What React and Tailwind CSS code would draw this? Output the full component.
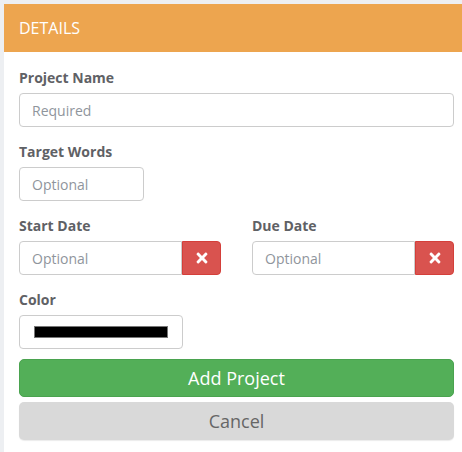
import React from "react";
import { FaTimes } from "react-icons/fa";

function Label({ children }) {
  return (
    <div className="h-5 leading-5 mb-[5px] text-[14px] font-bold text-[#5f6165]">
      {children}
    </div>
  );
}

function DateField({ label }) {
  return (
    <div className="flex-1">
      <Label>{label}</Label>
      <div className="flex h-[34px]">
        <div className="flex-1 flex items-center border border-[#cccccc] rounded-l-[4px] pl-3 text-[14px] text-[#8f959c]">
          Optional
        </div>
        <div className="w-[39px] flex items-center justify-center bg-[#d9534f] border border-[#d43f3a] rounded-r-[4px] text-white">
          <FaTimes className="w-[16px] h-[16px]" />
        </div>
      </div>
    </div>
  );
}

export default function App() {
  return (
    <div
      className="min-h-[452px] bg-[#edeff2] pt-1 pl-1"
      style={{ fontFamily: '"Open Sans", "Liberation Sans", sans-serif' }}
    >
      <div className="bg-white min-h-[448px]">
        <div className="h-12 bg-[#eda54f] flex items-center pl-[15px] text-white text-[16px]">
          DETAILS
        </div>
        <div className="pl-[15px] pr-[8px] pt-4">
          <div className="mb-[15px]">
            <Label>Project Name</Label>
            <div className="h-[34px] flex items-center border border-[#cccccc] rounded-[4px] pl-3 text-[14px] text-[#8f959c]">
              Required
            </div>
          </div>
          <div className="mb-[15px]">
            <Label>Target Words</Label>
            <div className="w-[125px] h-[34px] flex items-center border border-[#cccccc] rounded-[4px] pl-3 text-[14px] text-[#8f959c]">
              Optional
            </div>
          </div>
          <div className="mb-[15px] flex gap-[31px]">
            <DateField label="Start Date" />
            <DateField label="Due Date" />
          </div>
          <div className="mb-[10px]">
            <Label>Color</Label>
            <div className="w-[164px] h-[34px] flex items-center border border-[#cccccc] rounded-[4px] px-[14px]">
              <div className="flex-1 h-[12px] bg-black border border-[#777777]" />
            </div>
          </div>
          <div className="h-[38px] flex items-center justify-center bg-[#53af58] border border-[#4aa34f] rounded-[5px] text-white text-[18px]">
            Add Project
          </div>
          <div className="mt-[5px] h-[38px] flex items-center justify-center bg-[#d9d9d9] rounded-[5px] text-[#666666] text-[18px] shadow-[0_1px_1px_rgba(0,0,0,0.08)]">
            Cancel
          </div>
        </div>
      </div>
    </div>
  );
}
